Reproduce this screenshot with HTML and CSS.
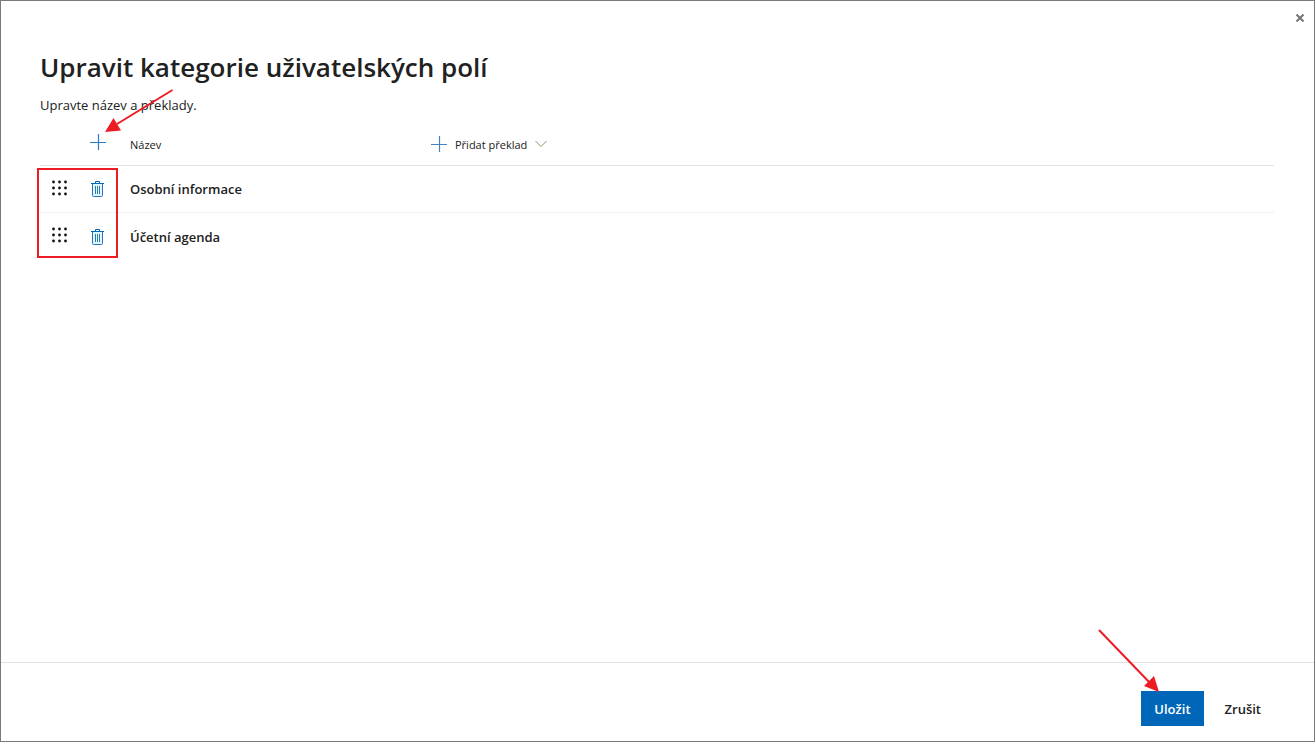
FILE: index.html
```html
<!DOCTYPE html>
<html lang="cs">
<head>
    <meta charset="UTF-8">
    <meta name="viewport" content="width=device-width, initial-scale=1">
    <title>Upravit kategorie uživatelských polí</title>
    <link rel="stylesheet" href="styles.css">
</head>
<body>
    <!-- Shared icons -->
    <svg class="sprite" aria-hidden="true">
        <symbol id="icon-plus" viewBox="0 0 16 16">
            <path d="M8.500 0v16M0 8.500h16" fill="none" stroke="currentColor" stroke-width="1.2"/>
        </symbol>
        <symbol id="icon-drag" viewBox="0 0 16 16">
            <g fill="currentColor">
                <circle cx="1.5" cy="2" r="1.4"/><circle cx="7.5" cy="2" r="1.4"/><circle cx="13.500" cy="2" r="1.4"/>
                <circle cx="1.5" cy="8" r="1.4"/><circle cx="7.5" cy="8" r="1.4"/><circle cx="13.500" cy="8" r="1.4"/>
                <circle cx="1.5" cy="14" r="1.4"/><circle cx="7.5" cy="14" r="1.4"/><circle cx="13.500" cy="14" r="1.4"/>
            </g>
        </symbol>
        <symbol id="icon-trash" viewBox="0 0 13 16">
            <path d="M1.500 2.500h10v13h-10z" fill="#dcfafa"/>
            <path d="M0 2.500h13M4.500 2V.5h4V2" fill="none" stroke="#0067b8"/>
            <path d="M1.500 3v11.500q0 1 1 1h8q1 0 1-1V3" fill="none" stroke="#2a70c8"/>
            <path d="M4.500 5v8M8.500 5v8" fill="none" stroke="#3a6cc0"/>
            <path d="M6.500 5v8" fill="none" stroke="#2c8a86"/>
        </symbol>
    </svg>

    <main class="dialog">
        <button class="close" type="button" aria-label="Zavřít">
            <svg width="8" height="8" viewBox="0 0 8 8"><path d="M.5.5l7 7M7.500.5l-7 7"/></svg>
        </button>

        <section class="content">
            <h1>Upravit kategorie uživatelských polí</h1>
            <p class="intro">Upravte název a překlady.</p>

            <div class="table-wrap">
                <table class="categories">
                    <thead>
                        <tr>
                            <td class="col-drag"></td>
                            <td class="col-action">
                                <button class="icon-button add" type="button" aria-label="Přidat kategorii">
                                    <svg width="16" height="16"><use href="#icon-plus"/></svg>
                                </button>
                            </td>
                            <th class="col-name" scope="col">Název</th>
                            <th scope="col">
                                <button class="translate" type="button">
                                    <svg class="plus" width="16" height="16"><use href="#icon-plus"/></svg>
                                    Přidat překlad
                                    <svg class="chevron" width="12" height="8" viewBox="0 0 12 8"><path d="M.5 1L6 6.500 11.500 1"/></svg>
                                </button>
                            </th>
                        </tr>
                    </thead>
                    <tbody>
                        <tr>
                            <td><button class="icon-button drag" type="button" aria-label="Přesunout Osobní informace"><svg width="16" height="16"><use href="#icon-drag"/></svg></button></td>
                            <td><button class="icon-button trash" type="button" aria-label="Odstranit Osobní informace"><svg width="13" height="16"><use href="#icon-trash"/></svg></button></td>
                            <td class="name">Osobní informace</td>
                            <td></td>
                        </tr>
                        <tr>
                            <td><button class="icon-button drag" type="button" aria-label="Přesunout Účetní agenda"><svg width="16" height="16"><use href="#icon-drag"/></svg></button></td>
                            <td><button class="icon-button trash" type="button" aria-label="Odstranit Účetní agenda"><svg width="13" height="16"><use href="#icon-trash"/></svg></button></td>
                            <td class="name">Účetní agenda</td>
                            <td></td>
                        </tr>
                    </tbody>
                </table>

                <!-- Callouts over the table -->
                <div class="highlight"></div>
                <svg class="arrow arrow-add" width="68" height="44" viewBox="0 0 68 44" aria-hidden="true">
                    <path class="line" d="M67.500 1L12 35"/>
                    <path class="head" d="M0 43L8.500 29 16 41.500z"/>
                </svg>
            </div>
        </section>

        <footer class="footer">
            <div class="save-wrap">
                <button class="button primary" type="submit">Uložit</button>
                <svg class="arrow arrow-save" width="62" height="64" viewBox="0 0 62 64" aria-hidden="true">
                    <path class="line" d="M1 1L52 54"/>
                    <path class="head" d="M61 63L46 57 56 47z"/>
                </svg>
            </div>
            <button class="button" type="button">Zrušit</button>
        </footer>
    </main>
</body>
</html>
```
FILE: styles.css
```css
* {
    box-sizing: border-box;
}
body {
    margin: 0;
    font-family: "Segoe UI", "Open Sans", "Noto Sans", sans-serif;
    font-size: 13px;
    color: #212121;
    background: #fff;
}
button {
    padding: 0;
    border: none;
    background: none;
    color: inherit;
    font: inherit;
    cursor: pointer;
}
svg {
    display: block;
}
.sprite {
    display: none;
}
.dialog {
    position: relative;
    display: flex;
    flex-direction: column;
    min-height: 100vh;
    border: 1px solid #7a7a7a;
}
.close {
    position: absolute;
    top: 8px;
    right: 5px;
    padding: 5px;
}
.close path {
    fill: none;
    stroke: #757575;
    stroke-width: 2;
}

/* Content */
.content {
    flex: 1;
    padding: 46px 40px 24px 39px;
}
h1 {
    margin: 0;
    font-size: 26px;
    line-height: 40px;
    font-weight: 600;
}
.intro {
    margin: 8px 0;
    line-height: 20px;
}
.table-wrap {
    position: relative;
}
.categories {
    width: 100%;
    table-layout: fixed;
    border-collapse: separate;
    border-spacing: 0;
}
.categories th,
.categories td {
    height: 47px;
    padding: 0;
    text-align: left;
    vertical-align: middle;
    border-bottom: 1px solid #f0f0f0;
}
.categories thead th,
.categories thead td {
    height: 43px;
    font-size: 11px;
    font-weight: 400;
    border-color: #e0e0e0;
}
.categories tbody tr:last-child td {
    border-bottom: none;
}
.col-drag {
    width: 40px;
}
.col-action {
    width: 50px;
}
.col-name {
    width: 300px;
}
.categories .name {
    font-weight: 600;
}
.icon-button {
    display: block;
}
.add {
    margin-left: 10px;
    padding-bottom: 4px;
    color: #2b7cc4;
}
.drag {
    margin-left: 12px;
    padding-bottom: 3px;
    color: #111;
}
.trash {
    margin-left: 11px;
}
.translate {
    display: flex;
    align-items: center;
    gap: 8px;
    margin-left: 1px;
}
.plus {
    color: #4683c4;
}
.chevron path {
    fill: none;
    stroke: #a08a6a;
}

/* Footer */
.footer {
    display: flex;
    justify-content: flex-end;
    gap: 8px;
    padding: 28px 40px 15px;
    border-top: 1px solid #e0e0e0;
}
.button {
    height: 35px;
    padding: 0 13px;
    font-weight: 600;
}
.primary {
    background: #0067b8;
    color: #fff;
}
.save-wrap {
    position: relative;
}

/* Callouts */
.highlight {
    position: absolute;
    top: 45px;
    left: -3px;
    width: 81px;
    height: 90px;
    border: 2px solid #ed1c24;
    pointer-events: none;
}
.arrow {
    position: absolute;
    pointer-events: none;
}
.arrow-add {
    top: -34px;
    left: 65px;
}
.arrow-save {
    top: -62px;
    left: -43px;
}
.line {
    fill: none;
    stroke: #ed1c24;
    stroke-width: 2;
}
.head {
    fill: #ed1c24;
}
```
